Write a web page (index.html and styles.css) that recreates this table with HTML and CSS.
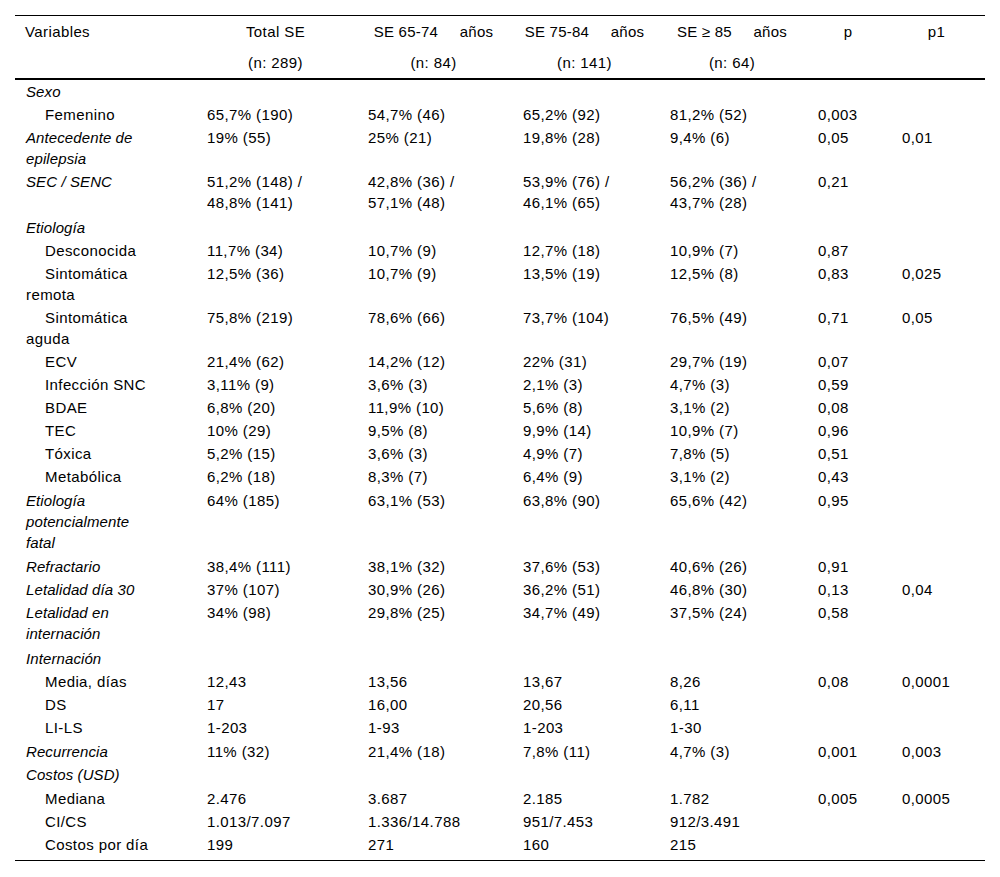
FILE: index.html
```html
<!DOCTYPE html>
<html lang="es">
<head>
<meta charset="utf-8">
<title>Tabla</title>
<link rel="stylesheet" href="styles.css">
</head>
<body>
<div class="wrap">
<table class="data">
  <colgroup>
    <col class="c0"><col class="c1"><col class="c2"><col class="c3"><col class="c4"><col class="c5"><col class="c6">
  </colgroup>
  <thead>
    <tr class="h1">
      <th class="lab">Variables</th>
      <th>Total SE</th>
      <th class="pre">SE 65-74     años</th>
      <th class="pre">SE 75-84     años</th>
      <th class="pre">SE ≥ 85     años</th>
      <th>p</th>
      <th>p1</th>
    </tr>
    <tr class="h2">
      <th class="lab"></th>
      <th>(n: 289)</th>
      <th>(n: 84)</th>
      <th>(n: 141)</th>
      <th>(n: 64)</th>
      <th></th>
      <th></th>
    </tr>
  </thead>
  <tbody>
    <tr><td class="lab it">Sexo</td><td></td><td></td><td></td><td></td><td></td><td></td></tr>
    <tr><td class="lab sub">Femenino</td><td>65,7% (190)</td><td>54,7% (46)</td><td>65,2% (92)</td><td>81,2% (52)</td><td>0,003</td><td></td></tr>
    <tr><td class="lab it">Antecedente de epilepsia</td><td>19% (55)</td><td>25% (21)</td><td>19,8% (28)</td><td>9,4% (6)</td><td>0,05</td><td>0,01</td></tr>
    <tr><td class="lab it">SEC / SENC</td><td>51,2% (148) /<br>48,8% (141)</td><td>42,8% (36) /<br>57,1% (48)</td><td>53,9% (76) /<br>46,1% (65)</td><td>56,2% (36) /<br>43,7% (28)</td><td>0,21</td><td></td></tr>
    <tr class="gap"><td class="lab it">Etiología</td><td></td><td></td><td></td><td></td><td></td><td></td></tr>
    <tr><td class="lab sub">Desconocida</td><td>11,7% (34)</td><td>10,7% (9)</td><td>12,7% (18)</td><td>10,9% (7)</td><td>0,87</td><td></td></tr>
    <tr><td class="lab sub">Sintomática remota</td><td>12,5% (36)</td><td>10,7% (9)</td><td>13,5% (19)</td><td>12,5% (8)</td><td>0,83</td><td>0,025</td></tr>
    <tr><td class="lab sub">Sintomática aguda</td><td>75,8% (219)</td><td>78,6% (66)</td><td>73,7% (104)</td><td>76,5% (49)</td><td>0,71</td><td>0,05</td></tr>
    <tr><td class="lab sub">ECV</td><td>21,4% (62)</td><td>14,2% (12)</td><td>22% (31)</td><td>29,7% (19)</td><td>0,07</td><td></td></tr>
    <tr><td class="lab sub">Infección SNC</td><td>3,11% (9)</td><td>3,6% (3)</td><td>2,1% (3)</td><td>4,7% (3)</td><td>0,59</td><td></td></tr>
    <tr><td class="lab sub">BDAE</td><td>6,8% (20)</td><td>11,9% (10)</td><td>5,6% (8)</td><td>3,1% (2)</td><td>0,08</td><td></td></tr>
    <tr><td class="lab sub">TEC</td><td>10% (29)</td><td>9,5% (8)</td><td>9,9% (14)</td><td>10,9% (7)</td><td>0,96</td><td></td></tr>
    <tr><td class="lab sub">Tóxica</td><td>5,2% (15)</td><td>3,6% (3)</td><td>4,9% (7)</td><td>7,8% (5)</td><td>0,51</td><td></td></tr>
    <tr><td class="lab sub">Metabólica</td><td>6,2% (18)</td><td>8,3% (7)</td><td>6,4% (9)</td><td>3,1% (2)</td><td>0,43</td><td></td></tr>
    <tr class="gap1"><td class="lab it">Etiología potencialmente fatal</td><td>64% (185)</td><td>63,1% (53)</td><td>63,8% (90)</td><td>65,6% (42)</td><td>0,95</td><td></td></tr>
    <tr class="gap1"><td class="lab it">Refractario</td><td>38,4% (111)</td><td>38,1% (32)</td><td>37,6% (53)</td><td>40,6% (26)</td><td>0,91</td><td></td></tr>
    <tr><td class="lab it">Letalidad día 30</td><td>37% (107)</td><td>30,9% (26)</td><td>36,2% (51)</td><td>46,8% (30)</td><td>0,13</td><td>0,04</td></tr>
    <tr><td class="lab it">Letalidad en internación</td><td>34% (98)</td><td>29,8% (25)</td><td>34,7% (49)</td><td>37,5% (24)</td><td>0,58</td><td></td></tr>
    <tr class="gap"><td class="lab it">Internación</td><td></td><td></td><td></td><td></td><td></td><td></td></tr>
    <tr><td class="lab sub">Media, días</td><td>12,43</td><td>13,56</td><td>13,67</td><td>8,26</td><td>0,08</td><td>0,0001</td></tr>
    <tr><td class="lab sub">DS</td><td>17</td><td>16,00</td><td>20,56</td><td>6,11</td><td></td><td></td></tr>
    <tr><td class="lab sub">LI-LS</td><td>1-203</td><td>1-93</td><td>1-203</td><td>1-30</td><td></td><td></td></tr>
    <tr class="gap1"><td class="lab it">Recurrencia</td><td>11% (32)</td><td>21,4% (18)</td><td>7,8% (11)</td><td>4,7% (3)</td><td>0,001</td><td>0,003</td></tr>
    <tr><td class="lab it">Costos (USD)</td><td></td><td></td><td></td><td></td><td></td><td></td></tr>
    <tr class="gap1"><td class="lab sub">Mediana</td><td>2.476</td><td>3.687</td><td>2.185</td><td>1.782</td><td>0,005</td><td>0,0005</td></tr>
    <tr><td class="lab sub">CI/CS</td><td>1.013/7.097</td><td>1.336/14.788</td><td>951/7.453</td><td>912/3.491</td><td></td><td></td></tr>
    <tr class="last"><td class="lab sub">Costos por día</td><td>199</td><td>271</td><td>160</td><td>215</td><td></td><td></td></tr>
  </tbody>
</table>
</div>
</body>
</html>
```

FILE: styles.css
```css
html, body {
  margin: 0;
  padding: 0;
  background: #ffffff;
}

.wrap {
  padding: 15px 15px 0 15px;
}

.data {
  width: 970px;
  table-layout: fixed;
  border-collapse: separate;
  border-spacing: 0;
  font-family: "Liberation Sans", Arial, sans-serif;
  font-size: 15px;
  letter-spacing: 0.4px;
  line-height: 21px;
  color: #000000;
}

.c0 { width: 182px; }
.c1 { width: 161px; }
.c2 { width: 155px; }
.c3 { width: 147px; }
.c4 { width: 148px; }
.c5 { width: 84px; }
.c6 { width: 93px; }

.data th {
  font-weight: normal;
  text-align: center;
  padding: 5px 14px 5px 10px;
  vertical-align: top;
}

.data th.pre {
  white-space: pre;
  letter-spacing: 0.2px;
}

.data th.lab {
  text-align: left;
}

.h1 th {
  border-top: 1px solid #000000;
}

.h2 th {
  border-bottom: 2px solid #000000;
}

.data td {
  padding: 1px 14px 1px 10px;
  vertical-align: top;
  text-align: left;
}

.data td.lab {
  padding-left: 11px;
  padding-right: 41px;
}

.it {
  font-style: italic;
  letter-spacing: 0.1px;
}

.sub {
  text-indent: 19px;
}

.gap td {
  padding-top: 3px;
}

.gap1 td {
  padding-top: 2px;
}

.last td {
  padding-bottom: 5px;
  border-bottom: 1px solid #000000;
}
```
